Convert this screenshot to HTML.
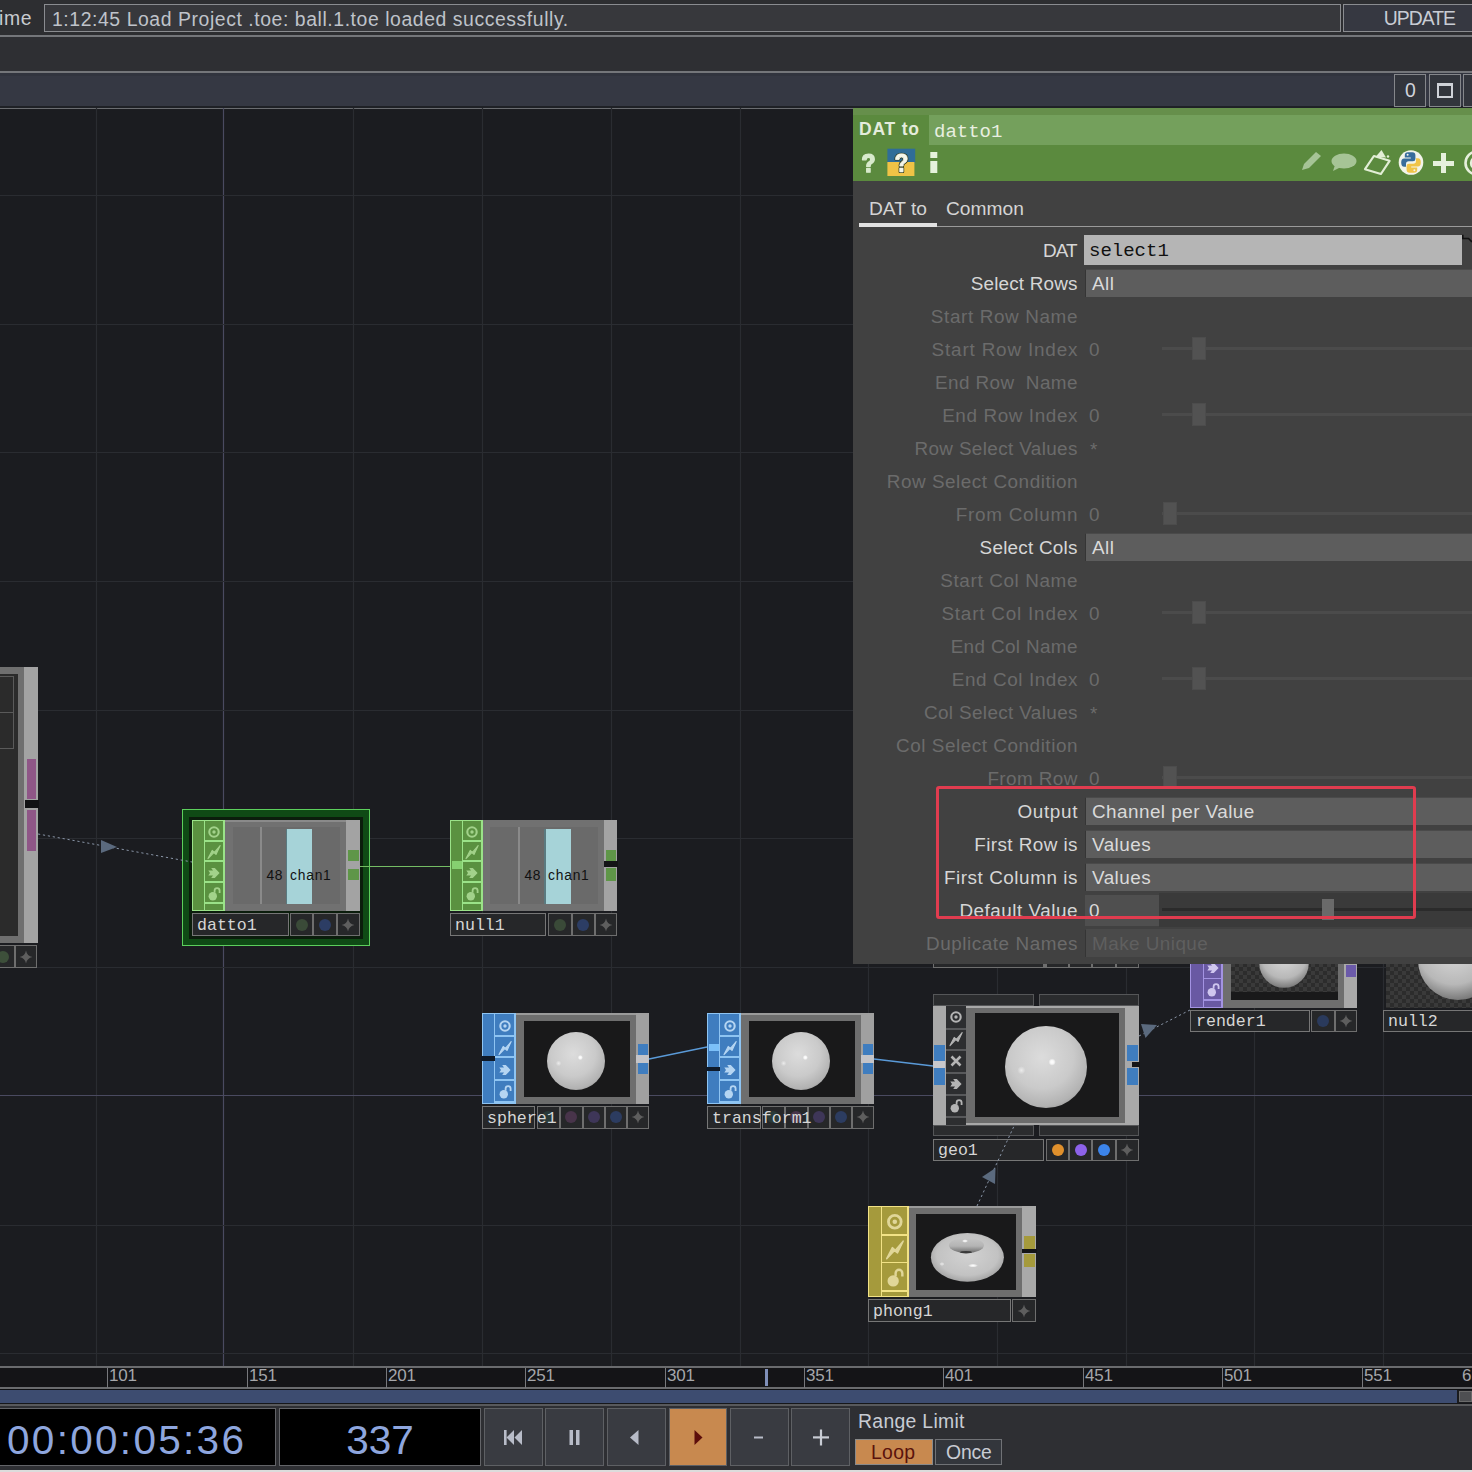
<!DOCTYPE html>
<html><head><meta charset="utf-8"><style>
html,body{margin:0;padding:0;width:1472px;height:1472px;overflow:hidden;background:#1b1c20}
body>div{position:absolute}
.t{position:absolute;white-space:pre;line-height:1}
</style></head><body>
<div style="left:0px;top:0px;width:1472px;height:35px;background:#2d2e31"></div>
<div style="left:0px;top:35px;width:1472px;height:1.5px;background:#74767a"></div>
<div style="left:0px;top:36.5px;width:1472px;height:34.5px;background:#2e2f33"></div>
<div style="left:0px;top:71px;width:1472px;height:1.5px;background:#74767a"></div>
<div style="left:0px;top:72.5px;width:1472px;height:33.5px;background:#353843"></div>
<div style="left:0px;top:72.5px;width:1472px;height:3.5px;background:#31343e"></div>
<div style="left:0px;top:106px;width:1472px;height:2px;background:#1f2126"></div>
<div style="left:0px;top:108px;width:853px;height:1.2000000000000028px;background:#6a6c70"></div>
<div class="t" style="left:-1px;top:8.5px;font-family:'Liberation Sans',sans-serif;font-size:19.4px;font-weight:normal;color:#c8cbd0;letter-spacing:0.6px;">ime</div>
<div style="left:44px;top:4px;width:1297px;height:28px;background:#37383c;border:1.2px solid #8a8c90;box-sizing:border-box"></div>
<div class="t" style="left:52px;top:9.5px;font-family:'Liberation Sans',sans-serif;font-size:19.4px;font-weight:normal;color:#bfc3ca;letter-spacing:0.57px;">1:12:45 Load Project .toe: ball.1.toe loaded successfully.</div>
<div style="left:1343px;top:4px;width:137px;height:28px;background:#363841;border:1.2px solid #8a8c90;box-sizing:border-box"></div>
<div class="t" style="right:17px;top:8.5px;font-family:'Liberation Sans',sans-serif;font-size:19.4px;font-weight:normal;color:#c8ccd4;letter-spacing:-1px;">UPDATE</div>
<div style="left:1394px;top:74px;width:32px;height:33px;background:#32353c;border:1px solid #85878b;box-sizing:border-box"></div>
<div class="t" style="left:1410.5px;transform:translateX(-50%);top:80.5px;font-family:'Liberation Sans',sans-serif;font-size:19.4px;font-weight:normal;color:#d0d3da;letter-spacing:0px;">0</div>
<div style="left:1429px;top:74px;width:32px;height:33px;background:#32353c;border:1px solid #85878b;box-sizing:border-box"></div>
<div style="left:1437px;top:83px;width:16px;height:15px;border:2px solid #cfd2d8;border-top-width:3px;box-sizing:border-box"></div>
<div style="left:1463px;top:74px;width:17px;height:33px;background:#32353c;border:1px solid #85878b;box-sizing:border-box"></div>
<div style="left:0px;top:109.2px;width:1472px;height:1256.8px;background:#1b1c20"></div>
<svg style="position:absolute;left:0;top:108px" width="1472" height="1258"><line x1="96.5" y1="0" x2="96.5" y2="1258" stroke="#2a2c31" stroke-width="1.2"/><line x1="223.5" y1="0" x2="223.5" y2="1258" stroke="#4a4a60" stroke-width="1.2"/><line x1="353.5" y1="0" x2="353.5" y2="1258" stroke="#2a2c31" stroke-width="1.2"/><line x1="482.5" y1="0" x2="482.5" y2="1258" stroke="#2a2c31" stroke-width="1.2"/><line x1="611.5" y1="0" x2="611.5" y2="1258" stroke="#2a2c31" stroke-width="1.2"/><line x1="740.5" y1="0" x2="740.5" y2="1258" stroke="#2a2c31" stroke-width="1.2"/><line x1="868.5" y1="0" x2="868.5" y2="1258" stroke="#2a2c31" stroke-width="1.2"/><line x1="997.5" y1="0" x2="997.5" y2="1258" stroke="#2a2c31" stroke-width="1.2"/><line x1="1126.5" y1="0" x2="1126.5" y2="1258" stroke="#2a2c31" stroke-width="1.2"/><line x1="1254.5" y1="0" x2="1254.5" y2="1258" stroke="#2a2c31" stroke-width="1.2"/><line x1="1383.5" y1="0" x2="1383.5" y2="1258" stroke="#2a2c31" stroke-width="1.2"/><line x1="0" y1="87.5" x2="1472" y2="87.5" stroke="#2a2c31" stroke-width="1.2"/><line x1="0" y1="216.5" x2="1472" y2="216.5" stroke="#2a2c31" stroke-width="1.2"/><line x1="0" y1="344.5" x2="1472" y2="344.5" stroke="#2a2c31" stroke-width="1.2"/><line x1="0" y1="473.5" x2="1472" y2="473.5" stroke="#2a2c31" stroke-width="1.2"/><line x1="0" y1="602.5" x2="1472" y2="602.5" stroke="#2a2c31" stroke-width="1.2"/><line x1="0" y1="730.5" x2="1472" y2="730.5" stroke="#2a2c31" stroke-width="1.2"/><line x1="0" y1="859.5" x2="1472" y2="859.5" stroke="#2a2c31" stroke-width="1.2"/><line x1="0" y1="987.5" x2="1472" y2="987.5" stroke="#4a4a60" stroke-width="1.2"/><line x1="0" y1="1117.5" x2="1472" y2="1117.5" stroke="#2a2c31" stroke-width="1.2"/><line x1="0" y1="1245.5" x2="1472" y2="1245.5" stroke="#2a2c31" stroke-width="1.2"/></svg>
<div style="left:0px;top:667px;width:38px;height:276px;background:#6f6f6f"></div>
<div style="left:0px;top:674px;width:18px;height:262px;background:#2b2b2b"></div>
<div style="left:0px;top:676px;width:14px;height:73px;border:1px solid #5a5a5a;border-left:none;box-sizing:border-box"></div>
<div style="left:0px;top:712px;width:14px;height:1px;background:#5a5a5a"></div>
<div style="left:24px;top:667px;width:14px;height:276px;background:#a3a3a3"></div>
<div style="left:26.5px;top:759px;width:9.5px;height:40px;background:#8f5687"></div>
<div style="left:26.5px;top:810px;width:9.5px;height:41px;background:#8f5687"></div>
<div style="left:25px;top:800px;width:14px;height:8px;background:#111214"></div>
<div style="left:-10px;top:945px;width:25px;height:23px;background:#262729;border:1.6px solid #6e6e6e;box-sizing:border-box"></div>
<div style="left:-3.5px;top:950.5px;width:12px;height:12px;border-radius:50%;background:#3d4f3a"></div>
<div style="left:15px;top:945px;width:22px;height:23px;background:#262729;border:1.6px solid #6e6e6e;box-sizing:border-box"></div>
<svg style="position:absolute;left:18.0px;top:948.5px" width="16.0" height="16.0" viewBox="0 0 16 16"><path d="M8 1.5 Q9 7 14.5 8 Q9 9 8 14.5 Q7 9 1.5 8 Q7 7 8 1.5 Z" fill="#5e5e5e"/></svg>
<div style="left:182px;top:809px;width:188px;height:137px;background:#0f4a15;border:1.6px solid #5ccf5c;box-sizing:border-box"></div>
<div style="left:189px;top:817px;width:174px;height:122px;background:#0b1d0c"></div>
<div style="left:192px;top:820px;width:168px;height:91px;background:#717171"></div>
<div style="left:225px;top:820px;width:121px;height:2px;background:#8a8a8a"></div>
<div style="left:233px;top:827px;width:107px;height:77px;background:#6a6a6a"></div>
<div style="left:260px;top:827px;width:1.5px;height:77px;background:#8a8a8a"></div>
<div style="left:285.5px;top:829px;width:26.5px;height:75px;background:#a6d3d8"></div>
<div style="left:285.5px;top:829px;width:1.5px;height:75px;background:#5a7a80"></div>
<div style="left:192px;top:820px;width:33px;height:91px;background:#5a9140"></div>
<div style="left:192px;top:820px;width:1.3000000000000114px;height:91px;background:#9ae288"></div>
<div style="left:192px;top:820px;width:33px;height:1.2999999999999545px;background:#9ae288"></div>
<div style="left:192px;top:909.7px;width:33px;height:1.2999999999999545px;background:#9ae288"></div>
<div style="left:203.7px;top:820px;width:1.3000000000000114px;height:91px;background:#9ae288"></div>
<div style="left:223px;top:820px;width:2px;height:91px;background:#9ae288"></div>
<div style="left:204px;top:840.3px;width:21px;height:1.400000000000091px;background:#9ae288"></div>
<div style="left:204px;top:860.3px;width:21px;height:1.400000000000091px;background:#9ae288"></div>
<div style="left:204px;top:881.3px;width:21px;height:1.400000000000091px;background:#9ae288"></div>
<div style="left:204px;top:902.3px;width:21px;height:1.400000000000091px;background:#9ae288"></div>
<svg style="position:absolute;left:206.2px;top:823.5px" width="16.0" height="16.0" viewBox="0 0 16 16"><circle cx="8" cy="8" r="4.7" fill="none" stroke="#a2d28a" stroke-width="2.1"/><circle cx="8" cy="8" r="1.7" fill="#a2d28a"/></svg>
<svg style="position:absolute;left:206.2px;top:844.0px" width="16.0" height="16.0" viewBox="0 0 16 16"><path d="M2 14.6 L6.2 6.4 L8.4 8.4 L14.2 1.6 L10 10.4 L7.8 8.6 Z" fill="#a2d28a" stroke="#a2d28a" stroke-width="1.1" stroke-linejoin="round"/></svg>
<svg style="position:absolute;left:206.2px;top:864.5px" width="16.0" height="16.0" viewBox="0 0 16 16"><path d="M2.3 5.6 H7 L5.2 3 H8.8 L13.6 8 L8.8 13 H5.2 L7 10.4 H2.3 L4 8 Z" fill="#a2d28a"/></svg>
<svg style="position:absolute;left:206.2px;top:885.5px" width="16.0" height="16.0" viewBox="0 0 16 16"><circle cx="6.8" cy="10.3" r="4.2" fill="#a2d28a"/><path d="M8.6 6.8 V4.6 A2.5 2.5 0 0 1 13.6 4.6 V7" fill="none" stroke="#a2d28a" stroke-width="1.8"/></svg>
<div style="left:346px;top:820px;width:14px;height:91px;background:#a3a3a3"></div>
<div style="left:347.5px;top:850px;width:11.0px;height:11px;background:#5f9648"></div>
<div style="left:347.5px;top:869px;width:11.0px;height:11px;background:#5f9648"></div>
<div class="t" style="left:266.5px;top:869.3px;font-family:'Liberation Sans',sans-serif;font-size:13.8px;font-weight:normal;color:#111111;letter-spacing:0.6px;">48</div>
<div class="t" style="left:290px;top:869.3px;font-family:'Liberation Sans',sans-serif;font-size:13.8px;font-weight:normal;color:#111111;letter-spacing:0.8px;">chan1</div>
<div style="left:192px;top:913px;width:97px;height:23px;background:#262729;border:1.6px solid #767676;box-sizing:border-box"></div>
<div class="t" style="left:197px;top:918.4px;font-family:'Liberation Mono',monospace;font-size:16.6px;font-weight:normal;color:#d6d6d6;letter-spacing:0px;">datto1</div>
<div style="left:290px;top:913px;width:23px;height:23px;background:#262729;border:1.6px solid #6e6e6e;box-sizing:border-box"></div>
<div style="left:295.5px;top:918.5px;width:12px;height:12px;border-radius:50%;background:#3a4a38"></div>
<div style="left:313px;top:913px;width:23.5px;height:23px;background:#262729;border:1.6px solid #6e6e6e;box-sizing:border-box"></div>
<div style="left:318.75px;top:918.5px;width:12px;height:12px;border-radius:50%;background:#2c3d64"></div>
<div style="left:336.5px;top:913px;width:23.5px;height:23px;background:#262729;border:1.6px solid #6e6e6e;box-sizing:border-box"></div>
<svg style="position:absolute;left:340.25px;top:916.5px" width="16.0" height="16.0" viewBox="0 0 16 16"><path d="M8 1.5 Q9 7 14.5 8 Q9 9 8 14.5 Q7 9 1.5 8 Q7 7 8 1.5 Z" fill="#5e5e5e"/></svg>
<div style="left:360px;top:866px;width:90px;height:1.2000000000000455px;background:#74bc64"></div>
<div style="left:450px;top:820px;width:167px;height:91px;background:#717171"></div>
<div style="left:490px;top:827px;width:108px;height:77px;background:#6a6a6a"></div>
<div style="left:518px;top:827px;width:1.5px;height:77px;background:#8a8a8a"></div>
<div style="left:544px;top:829px;width:26.5px;height:75px;background:#a6d3d8"></div>
<div style="left:544px;top:829px;width:1.5px;height:75px;background:#5a7a80"></div>
<div style="left:450px;top:820px;width:32.5px;height:91px;background:#5a9140"></div>
<div style="left:450px;top:820px;width:1.3000000000000114px;height:91px;background:#9ae288"></div>
<div style="left:450px;top:820px;width:32.5px;height:1.2999999999999545px;background:#9ae288"></div>
<div style="left:450px;top:909.7px;width:32.5px;height:1.2999999999999545px;background:#9ae288"></div>
<div style="left:462.2px;top:820px;width:1.3000000000000114px;height:91px;background:#9ae288"></div>
<div style="left:480.5px;top:820px;width:2.0px;height:91px;background:#9ae288"></div>
<div style="left:462.5px;top:840.3px;width:20.0px;height:1.400000000000091px;background:#9ae288"></div>
<div style="left:462.5px;top:860.3px;width:20.0px;height:1.400000000000091px;background:#9ae288"></div>
<div style="left:462.5px;top:881.3px;width:20.0px;height:1.400000000000091px;background:#9ae288"></div>
<div style="left:462.5px;top:902.3px;width:20.0px;height:1.400000000000091px;background:#9ae288"></div>
<svg style="position:absolute;left:464.2px;top:823.5px" width="16.0" height="16.0" viewBox="0 0 16 16"><circle cx="8" cy="8" r="4.7" fill="none" stroke="#a2d28a" stroke-width="2.1"/><circle cx="8" cy="8" r="1.7" fill="#a2d28a"/></svg>
<svg style="position:absolute;left:464.2px;top:844.0px" width="16.0" height="16.0" viewBox="0 0 16 16"><path d="M2 14.6 L6.2 6.4 L8.4 8.4 L14.2 1.6 L10 10.4 L7.8 8.6 Z" fill="#a2d28a" stroke="#a2d28a" stroke-width="1.1" stroke-linejoin="round"/></svg>
<svg style="position:absolute;left:464.2px;top:864.5px" width="16.0" height="16.0" viewBox="0 0 16 16"><path d="M2.3 5.6 H7 L5.2 3 H8.8 L13.6 8 L8.8 13 H5.2 L7 10.4 H2.3 L4 8 Z" fill="#a2d28a"/></svg>
<svg style="position:absolute;left:464.2px;top:885.5px" width="16.0" height="16.0" viewBox="0 0 16 16"><circle cx="6.8" cy="10.3" r="4.2" fill="#a2d28a"/><path d="M8.6 6.8 V4.6 A2.5 2.5 0 0 1 13.6 4.6 V7" fill="none" stroke="#a2d28a" stroke-width="1.8"/></svg>
<div style="left:451.5px;top:861px;width:10.5px;height:7.5px;background:#86d070"></div>
<div style="left:604px;top:820px;width:13px;height:91px;background:#a3a3a3"></div>
<div style="left:605.5px;top:850px;width:10.0px;height:11px;background:#5f9648"></div>
<div style="left:605.5px;top:868px;width:10.0px;height:12.5px;background:#5f9648"></div>
<div style="left:604px;top:861px;width:14px;height:6px;background:#141416"></div>
<div class="t" style="left:524.5px;top:869.3px;font-family:'Liberation Sans',sans-serif;font-size:13.8px;font-weight:normal;color:#111111;letter-spacing:0.6px;">48</div>
<div class="t" style="left:548px;top:869.3px;font-family:'Liberation Sans',sans-serif;font-size:13.8px;font-weight:normal;color:#111111;letter-spacing:0.8px;">chan1</div>
<div style="left:450px;top:913px;width:96px;height:23px;background:#262729;border:1.6px solid #767676;box-sizing:border-box"></div>
<div class="t" style="left:455px;top:918.4px;font-family:'Liberation Mono',monospace;font-size:16.6px;font-weight:normal;color:#d6d6d6;letter-spacing:0px;">null1</div>
<div style="left:548px;top:913px;width:23.5px;height:23px;background:#262729;border:1.6px solid #6e6e6e;box-sizing:border-box"></div>
<div style="left:553.75px;top:918.5px;width:12px;height:12px;border-radius:50%;background:#3a4a38"></div>
<div style="left:571.5px;top:913px;width:23.0px;height:23px;background:#262729;border:1.6px solid #6e6e6e;box-sizing:border-box"></div>
<div style="left:577.0px;top:918.5px;width:12px;height:12px;border-radius:50%;background:#2c3d64"></div>
<div style="left:594.5px;top:913px;width:22.5px;height:23px;background:#262729;border:1.6px solid #6e6e6e;box-sizing:border-box"></div>
<svg style="position:absolute;left:597.75px;top:916.5px" width="16.0" height="16.0" viewBox="0 0 16 16"><path d="M8 1.5 Q9 7 14.5 8 Q9 9 8 14.5 Q7 9 1.5 8 Q7 7 8 1.5 Z" fill="#5e5e5e"/></svg>
<div style="left:482px;top:1013px;width:167px;height:91px;background:#6e6e6e"></div>
<div style="left:516px;top:1013px;width:120px;height:2px;background:#9a9a9a"></div>
<div style="left:524px;top:1021px;width:106px;height:76px;background:#19191a"></div>
<div style="left:482px;top:1013px;width:34px;height:91px;background:#3f7dbf"></div>
<div style="left:482px;top:1013px;width:1.3000000000000114px;height:91px;background:#8ec4f2"></div>
<div style="left:482px;top:1013px;width:34px;height:1.2999999999999545px;background:#8ec4f2"></div>
<div style="left:482px;top:1102.7px;width:34px;height:1.2999999999999545px;background:#8ec4f2"></div>
<div style="left:494.2px;top:1013px;width:1.3000000000000114px;height:91px;background:#8ec4f2"></div>
<div style="left:514px;top:1013px;width:2px;height:91px;background:#8ec4f2"></div>
<div style="left:494.5px;top:1035.3px;width:21.5px;height:1.400000000000091px;background:#8ec4f2"></div>
<div style="left:494.5px;top:1056.3px;width:21.5px;height:1.400000000000091px;background:#8ec4f2"></div>
<div style="left:494.5px;top:1079.3px;width:21.5px;height:1.400000000000091px;background:#8ec4f2"></div>
<div style="left:494.5px;top:1101.3px;width:21.5px;height:1.400000000000091px;background:#8ec4f2"></div>
<svg style="position:absolute;left:496.95px;top:1017.5px" width="16.0" height="16.0" viewBox="0 0 16 16"><circle cx="8" cy="8" r="4.7" fill="none" stroke="#b5d5f2" stroke-width="2.1"/><circle cx="8" cy="8" r="1.7" fill="#b5d5f2"/></svg>
<svg style="position:absolute;left:496.95px;top:1039.5px" width="16.0" height="16.0" viewBox="0 0 16 16"><path d="M2 14.6 L6.2 6.4 L8.4 8.4 L14.2 1.6 L10 10.4 L7.8 8.6 Z" fill="#b5d5f2" stroke="#b5d5f2" stroke-width="1.1" stroke-linejoin="round"/></svg>
<svg style="position:absolute;left:496.95px;top:1061.5px" width="16.0" height="16.0" viewBox="0 0 16 16"><path d="M2.3 5.6 H7 L5.2 3 H8.8 L13.6 8 L8.8 13 H5.2 L7 10.4 H2.3 L4 8 Z" fill="#b5d5f2"/></svg>
<svg style="position:absolute;left:496.95px;top:1084.0px" width="16.0" height="16.0" viewBox="0 0 16 16"><circle cx="6.8" cy="10.3" r="4.2" fill="#b5d5f2"/><path d="M8.6 6.8 V4.6 A2.5 2.5 0 0 1 13.6 4.6 V7" fill="none" stroke="#b5d5f2" stroke-width="1.8"/></svg>
<div style="left:481px;top:1056px;width:13.5px;height:5px;background:#0f1a28"></div>
<div style="left:636px;top:1013px;width:13px;height:91px;background:#a0a0a0"></div>
<div style="left:636px;top:1055px;width:13px;height:7.5px;background:#c4c4c8"></div>
<div style="left:637.5px;top:1044px;width:10.0px;height:11px;background:#3f7dbf"></div>
<div style="left:637.5px;top:1062.5px;width:10.0px;height:11.0px;background:#3f7dbf"></div>
<svg style="position:absolute;left:545px;top:1029.6px" width="62" height="62"><defs><radialGradient id="sp1" cx="0.45" cy="0.38" r="0.7"><stop offset="0" stop-color="#dcdcdc"/><stop offset="0.55" stop-color="#cacaca"/><stop offset="0.85" stop-color="#b2b2b2"/><stop offset="1" stop-color="#909090"/></radialGradient><radialGradient id="sp1h"><stop offset="0" stop-color="#fff"/><stop offset="0.5" stop-color="#fff" stop-opacity="0.8"/><stop offset="1" stop-color="#fff" stop-opacity="0"/></radialGradient><radialGradient id="sp1h2"><stop offset="0" stop-color="#fff" stop-opacity="0.6"/><stop offset="1" stop-color="#fff" stop-opacity="0"/></radialGradient></defs><circle cx="31" cy="31" r="29" fill="url(#sp1)"/><circle cx="35.35" cy="27.52" r="2.61" fill="url(#sp1h)"/><circle cx="13.600000000000001" cy="33.32" r="2.9000000000000004" fill="url(#sp1h2)"/></svg>
<div style="left:482px;top:1106px;width:53px;height:22.5px;background:#262729;border:1.6px solid #767676;box-sizing:border-box"></div>
<div style="left:537px;top:1106px;width:22.5px;height:22.5px;background:#262729;border:1.6px solid #6e6e6e;box-sizing:border-box"></div>
<div style="left:542.25px;top:1111.25px;width:12px;height:12px;border-radius:50%;background:#2a3a38"></div>
<div style="left:559.5px;top:1106px;width:23.0px;height:22.5px;background:#262729;border:1.6px solid #6e6e6e;box-sizing:border-box"></div>
<div style="left:565.0px;top:1111.25px;width:12px;height:12px;border-radius:50%;background:#48344a"></div>
<div style="left:582.5px;top:1106px;width:22.0px;height:22.5px;background:#262729;border:1.6px solid #6e6e6e;box-sizing:border-box"></div>
<div style="left:587.5px;top:1111.25px;width:12px;height:12px;border-radius:50%;background:#3e3658"></div>
<div style="left:604.5px;top:1106px;width:22.5px;height:22.5px;background:#262729;border:1.6px solid #6e6e6e;box-sizing:border-box"></div>
<div style="left:609.75px;top:1111.25px;width:12px;height:12px;border-radius:50%;background:#2c3c60"></div>
<div style="left:627px;top:1106px;width:22px;height:22.5px;background:#262729;border:1.6px solid #6e6e6e;box-sizing:border-box"></div>
<svg style="position:absolute;left:630.0px;top:1109.25px" width="16.0" height="16.0" viewBox="0 0 16 16"><path d="M8 1.5 Q9 7 14.5 8 Q9 9 8 14.5 Q7 9 1.5 8 Q7 7 8 1.5 Z" fill="#5e5e5e"/></svg>
<div class="t" style="left:487px;top:1111.4px;font-family:'Liberation Mono',monospace;font-size:16.6px;font-weight:normal;color:#d6d6d6;letter-spacing:0px;">sphere1</div>
<div style="left:707px;top:1013px;width:167px;height:91px;background:#6e6e6e"></div>
<div style="left:741px;top:1013px;width:120px;height:2px;background:#9a9a9a"></div>
<div style="left:749px;top:1021px;width:106px;height:76px;background:#19191a"></div>
<div style="left:707px;top:1013px;width:34px;height:91px;background:#3f7dbf"></div>
<div style="left:707px;top:1013px;width:1.2999999999999545px;height:91px;background:#8ec4f2"></div>
<div style="left:707px;top:1013px;width:34px;height:1.2999999999999545px;background:#8ec4f2"></div>
<div style="left:707px;top:1102.7px;width:34px;height:1.2999999999999545px;background:#8ec4f2"></div>
<div style="left:719.2px;top:1013px;width:1.2999999999999545px;height:91px;background:#8ec4f2"></div>
<div style="left:739px;top:1013px;width:2px;height:91px;background:#8ec4f2"></div>
<div style="left:719.5px;top:1035.3px;width:21.5px;height:1.400000000000091px;background:#8ec4f2"></div>
<div style="left:719.5px;top:1056.3px;width:21.5px;height:1.400000000000091px;background:#8ec4f2"></div>
<div style="left:719.5px;top:1079.3px;width:21.5px;height:1.400000000000091px;background:#8ec4f2"></div>
<div style="left:719.5px;top:1101.3px;width:21.5px;height:1.400000000000091px;background:#8ec4f2"></div>
<svg style="position:absolute;left:721.95px;top:1017.5px" width="16.0" height="16.0" viewBox="0 0 16 16"><circle cx="8" cy="8" r="4.7" fill="none" stroke="#b5d5f2" stroke-width="2.1"/><circle cx="8" cy="8" r="1.7" fill="#b5d5f2"/></svg>
<svg style="position:absolute;left:721.95px;top:1039.5px" width="16.0" height="16.0" viewBox="0 0 16 16"><path d="M2 14.6 L6.2 6.4 L8.4 8.4 L14.2 1.6 L10 10.4 L7.8 8.6 Z" fill="#b5d5f2" stroke="#b5d5f2" stroke-width="1.1" stroke-linejoin="round"/></svg>
<svg style="position:absolute;left:721.95px;top:1061.5px" width="16.0" height="16.0" viewBox="0 0 16 16"><path d="M2.3 5.6 H7 L5.2 3 H8.8 L13.6 8 L8.8 13 H5.2 L7 10.4 H2.3 L4 8 Z" fill="#b5d5f2"/></svg>
<svg style="position:absolute;left:721.95px;top:1084.0px" width="16.0" height="16.0" viewBox="0 0 16 16"><circle cx="6.8" cy="10.3" r="4.2" fill="#b5d5f2"/><path d="M8.6 6.8 V4.6 A2.5 2.5 0 0 1 13.6 4.6 V7" fill="none" stroke="#b5d5f2" stroke-width="1.8"/></svg>
<div style="left:706px;top:1067px;width:13.5px;height:4px;background:#0f1a28"></div>
<div style="left:708.5px;top:1043.5px;width:10.5px;height:7.0px;background:#7cc0f8"></div>
<div style="left:861px;top:1013px;width:13px;height:91px;background:#a0a0a0"></div>
<div style="left:861px;top:1055px;width:13px;height:7.5px;background:#c4c4c8"></div>
<div style="left:862.5px;top:1044px;width:10.0px;height:11px;background:#3f7dbf"></div>
<div style="left:862.5px;top:1062.5px;width:10.0px;height:11.0px;background:#3f7dbf"></div>
<svg style="position:absolute;left:770px;top:1029.6px" width="62" height="62"><defs><radialGradient id="sp2" cx="0.45" cy="0.38" r="0.7"><stop offset="0" stop-color="#dcdcdc"/><stop offset="0.55" stop-color="#cacaca"/><stop offset="0.85" stop-color="#b2b2b2"/><stop offset="1" stop-color="#909090"/></radialGradient><radialGradient id="sp2h"><stop offset="0" stop-color="#fff"/><stop offset="0.5" stop-color="#fff" stop-opacity="0.8"/><stop offset="1" stop-color="#fff" stop-opacity="0"/></radialGradient><radialGradient id="sp2h2"><stop offset="0" stop-color="#fff" stop-opacity="0.6"/><stop offset="1" stop-color="#fff" stop-opacity="0"/></radialGradient></defs><circle cx="31" cy="31" r="29" fill="url(#sp2)"/><circle cx="35.35" cy="27.52" r="2.61" fill="url(#sp2h)"/><circle cx="13.600000000000001" cy="33.32" r="2.9000000000000004" fill="url(#sp2h2)"/></svg>
<div style="left:707px;top:1106px;width:53.5px;height:22.5px;background:#262729;border:1.6px solid #767676;box-sizing:border-box"></div>
<div style="left:762px;top:1106px;width:22.5px;height:22.5px;background:#262729;border:1.6px solid #6e6e6e;box-sizing:border-box"></div>
<div style="left:767.25px;top:1111.25px;width:12px;height:12px;border-radius:50%;background:#2a3a38"></div>
<div style="left:784.5px;top:1106px;width:23.0px;height:22.5px;background:#262729;border:1.6px solid #6e6e6e;box-sizing:border-box"></div>
<div style="left:790.0px;top:1111.25px;width:12px;height:12px;border-radius:50%;background:#48344a"></div>
<div style="left:807.5px;top:1106px;width:22.0px;height:22.5px;background:#262729;border:1.6px solid #6e6e6e;box-sizing:border-box"></div>
<div style="left:812.5px;top:1111.25px;width:12px;height:12px;border-radius:50%;background:#3e3658"></div>
<div style="left:829.5px;top:1106px;width:22.5px;height:22.5px;background:#262729;border:1.6px solid #6e6e6e;box-sizing:border-box"></div>
<div style="left:834.75px;top:1111.25px;width:12px;height:12px;border-radius:50%;background:#2c3c60"></div>
<div style="left:852px;top:1106px;width:22px;height:22.5px;background:#262729;border:1.6px solid #6e6e6e;box-sizing:border-box"></div>
<svg style="position:absolute;left:855.0px;top:1109.25px" width="16.0" height="16.0" viewBox="0 0 16 16"><path d="M8 1.5 Q9 7 14.5 8 Q9 9 8 14.5 Q7 9 1.5 8 Q7 7 8 1.5 Z" fill="#5e5e5e"/></svg>
<div class="t" style="left:712px;top:1111.4px;font-family:'Liberation Mono',monospace;font-size:16.6px;font-weight:normal;color:#d6d6d6;letter-spacing:0px;">transform1</div>
<div style="left:933px;top:945px;width:110.5px;height:22.5px;background:#262729;border:1.6px solid #6e6e6e;box-sizing:border-box"></div>
<div style="left:1043.5px;top:945px;width:2.5px;height:22.5px;background:#262729;border:1.6px solid #6e6e6e;box-sizing:border-box"></div>
<div style="left:1046px;top:945px;width:23px;height:22.5px;background:#262729;border:1.6px solid #6e6e6e;box-sizing:border-box"></div>
<div style="left:1069px;top:945px;width:23px;height:22.5px;background:#262729;border:1.6px solid #6e6e6e;box-sizing:border-box"></div>
<div style="left:1092px;top:945px;width:23.5px;height:22.5px;background:#262729;border:1.6px solid #6e6e6e;box-sizing:border-box"></div>
<div style="left:1115.5px;top:945px;width:23.0px;height:22.5px;background:#262729;border:1.6px solid #6e6e6e;box-sizing:border-box"></div>
<div style="left:933px;top:994px;width:101px;height:12px;background:#2b2c2e;border:1.5px solid #555658;box-sizing:border-box"></div>
<div style="left:1039px;top:994px;width:100px;height:12px;background:#2b2c2e;border:1.5px solid #555658;box-sizing:border-box"></div>
<div style="left:933px;top:1125px;width:101px;height:11px;background:#2b2c2e;border:1.5px solid #555658;box-sizing:border-box"></div>
<div style="left:1039px;top:1125px;width:100px;height:11px;background:#2b2c2e;border:1.5px solid #555658;box-sizing:border-box"></div>
<div style="left:933px;top:1006px;width:206px;height:119px;background:#6c6c6c"></div>
<div style="left:966px;top:1006px;width:159px;height:2px;background:#a8a8a8"></div>
<div style="left:966px;top:1123px;width:159px;height:2px;background:#a8a8a8"></div>
<div style="left:975px;top:1013px;width:144px;height:104px;background:#19191a"></div>
<div style="left:933px;top:1006px;width:12.5px;height:119px;background:#a9a9a9"></div>
<div style="left:945.5px;top:1006px;width:20.5px;height:119px;background:#2d2e30"></div>
<div style="left:945.5px;top:1027.5px;width:20.5px;height:2.0px;background:#58595b"></div>
<div style="left:945.5px;top:1049px;width:20.5px;height:2px;background:#58595b"></div>
<div style="left:945.5px;top:1071.5px;width:20.5px;height:2.0px;background:#58595b"></div>
<div style="left:945.5px;top:1094px;width:20.5px;height:2px;background:#58595b"></div>
<div style="left:945.5px;top:1116px;width:20.5px;height:2px;background:#58595b"></div>
<svg style="position:absolute;left:947.8px;top:1009.25px" width="16.0" height="16.0" viewBox="0 0 16 16"><circle cx="8" cy="8" r="4.7" fill="none" stroke="#b4b4b4" stroke-width="2.1"/><circle cx="8" cy="8" r="1.7" fill="#b4b4b4"/></svg>
<svg style="position:absolute;left:947.8px;top:1031.25px" width="16.0" height="16.0" viewBox="0 0 16 16"><path d="M2 14.6 L6.2 6.4 L8.4 8.4 L14.2 1.6 L10 10.4 L7.8 8.6 Z" fill="#b4b4b4" stroke="#b4b4b4" stroke-width="1.1" stroke-linejoin="round"/></svg>
<svg style="position:absolute;left:947.8px;top:1053.25px" width="16.0" height="16.0" viewBox="0 0 16 16"><path d="M3.5 3.5 L12.5 12.5 M12.5 3.5 L3.5 12.5" stroke="#b4b4b4" stroke-width="2.6"/></svg>
<svg style="position:absolute;left:947.8px;top:1075.75px" width="16.0" height="16.0" viewBox="0 0 16 16"><path d="M2.3 5.6 H7 L5.2 3 H8.8 L13.6 8 L8.8 13 H5.2 L7 10.4 H2.3 L4 8 Z" fill="#b4b4b4"/></svg>
<svg style="position:absolute;left:947.8px;top:1098.0px" width="16.0" height="16.0" viewBox="0 0 16 16"><circle cx="6.8" cy="10.3" r="4.2" fill="#b4b4b4"/><path d="M8.6 6.8 V4.6 A2.5 2.5 0 0 1 13.6 4.6 V7" fill="none" stroke="#b4b4b4" stroke-width="1.8"/></svg>
<div style="left:934px;top:1045px;width:11px;height:15.5px;background:#3f7dbf"></div>
<div style="left:934px;top:1068px;width:11px;height:16.5px;background:#3f7dbf"></div>
<div style="left:933px;top:1060.5px;width:12px;height:7.5px;background:#c8c8cc"></div>
<div style="left:1125px;top:1006px;width:14px;height:119px;background:#a9a9a9"></div>
<div style="left:1126.5px;top:1045px;width:11.0px;height:15.5px;background:#3f7dbf"></div>
<div style="left:1126.5px;top:1068px;width:11.0px;height:16.5px;background:#3f7dbf"></div>
<div style="left:1132px;top:1062px;width:8px;height:4.5px;background:#141416"></div>
<svg style="position:absolute;left:1003px;top:1024px" width="86" height="86"><defs><radialGradient id="sp3" cx="0.45" cy="0.38" r="0.7"><stop offset="0" stop-color="#dcdcdc"/><stop offset="0.55" stop-color="#cacaca"/><stop offset="0.85" stop-color="#b2b2b2"/><stop offset="1" stop-color="#909090"/></radialGradient><radialGradient id="sp3h"><stop offset="0" stop-color="#fff"/><stop offset="0.5" stop-color="#fff" stop-opacity="0.8"/><stop offset="1" stop-color="#fff" stop-opacity="0"/></radialGradient><radialGradient id="sp3h2"><stop offset="0" stop-color="#fff" stop-opacity="0.6"/><stop offset="1" stop-color="#fff" stop-opacity="0"/></radialGradient></defs><circle cx="43" cy="43" r="41" fill="url(#sp3)"/><circle cx="49.15" cy="38.08" r="3.69" fill="url(#sp3h)"/><circle cx="18.400000000000002" cy="46.28" r="4.1000000000000005" fill="url(#sp3h2)"/></svg>
<div style="left:933px;top:1138.5px;width:111px;height:22.0px;background:#262729;border:1.6px solid #767676;box-sizing:border-box"></div>
<div class="t" style="left:938px;top:1142.9px;font-family:'Liberation Mono',monospace;font-size:16.6px;font-weight:normal;color:#d6d6d6;letter-spacing:0px;">geo1</div>
<div style="left:1046px;top:1138.5px;width:23.200000000000045px;height:22.0px;background:#262729;border:1.6px solid #6e6e6e;box-sizing:border-box"></div>
<div style="left:1051.6px;top:1143.5px;width:12px;height:12px;border-radius:50%;background:#e0902c"></div>
<div style="left:1069.2px;top:1138.5px;width:23.200000000000045px;height:22.0px;background:#262729;border:1.6px solid #6e6e6e;box-sizing:border-box"></div>
<div style="left:1074.8000000000002px;top:1143.5px;width:12px;height:12px;border-radius:50%;background:#8d62ea"></div>
<div style="left:1092.4px;top:1138.5px;width:23.199999999999818px;height:22.0px;background:#262729;border:1.6px solid #6e6e6e;box-sizing:border-box"></div>
<div style="left:1098.0px;top:1143.5px;width:12px;height:12px;border-radius:50%;background:#3c84ea"></div>
<div style="left:1115.6px;top:1138.5px;width:23.40000000000009px;height:22.0px;background:#262729;border:1.6px solid #6e6e6e;box-sizing:border-box"></div>
<svg style="position:absolute;left:1119.3px;top:1141.5px" width="16.0" height="16.0" viewBox="0 0 16 16"><path d="M8 1.5 Q9 7 14.5 8 Q9 9 8 14.5 Q7 9 1.5 8 Q7 7 8 1.5 Z" fill="#5e5e5e"/></svg>
<div style="left:1190px;top:963px;width:167px;height:45px;background:#6e6e6e"></div>
<div style="left:1231px;top:963px;width:107px;height:29px;background-color:#3a3a3a;background-image:linear-gradient(45deg,#2c2c2c 25%,transparent 25%,transparent 75%,#2c2c2c 75%),linear-gradient(45deg,#2c2c2c 25%,transparent 25%,transparent 75%,#2c2c2c 75%);background-size:8px 8px;background-position:0 0,4px 4px"></div>
<svg style="position:absolute;left:1259px;top:938px" width="50" height="50"><defs><radialGradient id="sp4" cx="0.5" cy="0.35" r="0.65"><stop offset="0" stop-color="#dcdcdc"/><stop offset="0.7" stop-color="#b8b8b8"/><stop offset="1" stop-color="#7a7a7a"/></radialGradient></defs><circle cx="25" cy="25" r="24.8" fill="url(#sp4)"/></svg>
<div style="left:1231px;top:992px;width:107px;height:8px;background:#19191a"></div>
<div style="left:1190px;top:955px;width:33px;height:53px;background:#6959a3"></div>
<div style="left:1190px;top:955px;width:1.2999999999999545px;height:53px;background:#a393e2"></div>
<div style="left:1190px;top:955px;width:33px;height:1.2999999999999545px;background:#a393e2"></div>
<div style="left:1190px;top:1006.7px;width:33px;height:1.2999999999999545px;background:#a393e2"></div>
<div style="left:1202.7px;top:955px;width:1.2999999999999545px;height:53px;background:#a393e2"></div>
<div style="left:1221px;top:955px;width:2px;height:53px;background:#a393e2"></div>
<div style="left:1203px;top:977.8px;width:20px;height:1.400000000000091px;background:#a393e2"></div>
<div style="left:1203px;top:999.3px;width:20px;height:1.400000000000091px;background:#a393e2"></div>
<svg style="position:absolute;left:1204.7px;top:959.75px" width="16.0" height="16.0" viewBox="0 0 16 16"><path d="M2.3 5.6 H7 L5.2 3 H8.8 L13.6 8 L8.8 13 H5.2 L7 10.4 H2.3 L4 8 Z" fill="#cfc6ee"/></svg>
<svg style="position:absolute;left:1204.7px;top:982.25px" width="16.0" height="16.0" viewBox="0 0 16 16"><circle cx="6.8" cy="10.3" r="4.2" fill="#cfc6ee"/><path d="M8.6 6.8 V4.6 A2.5 2.5 0 0 1 13.6 4.6 V7" fill="none" stroke="#cfc6ee" stroke-width="1.8"/></svg>
<div style="left:1344px;top:963px;width:13px;height:45px;background:#a9a9a9"></div>
<div style="left:1345.5px;top:964.5px;width:10.0px;height:12.0px;background:#6b5aa9"></div>
<div style="left:1190px;top:1009.5px;width:120px;height:22.0px;background:#262729;border:1.6px solid #767676;box-sizing:border-box"></div>
<div class="t" style="left:1196px;top:1013.9px;font-family:'Liberation Mono',monospace;font-size:16.6px;font-weight:normal;color:#d6d6d6;letter-spacing:0px;">render1</div>
<div style="left:1311px;top:1009.5px;width:23.799999999999955px;height:22.0px;background:#262729;border:1.6px solid #6e6e6e;box-sizing:border-box"></div>
<div style="left:1316.9px;top:1014.5px;width:12px;height:12px;border-radius:50%;background:#2a3a5c"></div>
<div style="left:1334.8px;top:1009.5px;width:22.200000000000045px;height:22.0px;background:#262729;border:1.6px solid #6e6e6e;box-sizing:border-box"></div>
<svg style="position:absolute;left:1337.9px;top:1012.5px" width="16.0" height="16.0" viewBox="0 0 16 16"><path d="M8 1.5 Q9 7 14.5 8 Q9 9 8 14.5 Q7 9 1.5 8 Q7 7 8 1.5 Z" fill="#5e5e5e"/></svg>
<div style="left:1386px;top:963px;width:90px;height:45px;background-color:#3a3a3a;background-image:linear-gradient(45deg,#2c2c2c 25%,transparent 25%,transparent 75%,#2c2c2c 75%),linear-gradient(45deg,#2c2c2c 25%,transparent 25%,transparent 75%,#2c2c2c 75%);background-size:8px 8px;background-position:0 0,4px 4px"></div>
<svg style="position:absolute;left:1418px;top:920px" width="80" height="80"><defs><radialGradient id="sp5" cx="0.45" cy="0.35" r="0.65"><stop offset="0" stop-color="#dcdcdc"/><stop offset="0.7" stop-color="#b8b8b8"/><stop offset="1" stop-color="#7a7a7a"/></radialGradient></defs><circle cx="40" cy="40" r="40" fill="url(#sp5)"/></svg>
<div style="left:1383px;top:1009.5px;width:97px;height:22.0px;background:#262729;border:1.6px solid #767676;box-sizing:border-box"></div>
<div class="t" style="left:1388px;top:1013.9px;font-family:'Liberation Mono',monospace;font-size:16.6px;font-weight:normal;color:#d6d6d6;letter-spacing:0px;">null2</div>
<div style="left:868px;top:1206px;width:168px;height:91px;background:#6e6e6e"></div>
<div style="left:909px;top:1206px;width:113px;height:2px;background:#9a9a9a"></div>
<div style="left:916px;top:1214px;width:100px;height:76px;background:#19191a"></div>
<div style="left:868px;top:1206px;width:41px;height:91px;background:#a59a3c"></div>
<div style="left:868px;top:1206px;width:1.2999999999999545px;height:91px;background:#f2e286"></div>
<div style="left:868px;top:1206px;width:41px;height:1.2999999999999545px;background:#f2e286"></div>
<div style="left:868px;top:1295.7px;width:41px;height:1.2999999999999545px;background:#f2e286"></div>
<div style="left:880.7px;top:1206px;width:1.2999999999999545px;height:91px;background:#f2e286"></div>
<div style="left:907px;top:1206px;width:2px;height:91px;background:#f2e286"></div>
<div style="left:881px;top:1234.3px;width:28px;height:1.400000000000091px;background:#f2e286"></div>
<div style="left:881px;top:1261.8px;width:28px;height:1.400000000000091px;background:#f2e286"></div>
<div style="left:881px;top:1290.3px;width:28px;height:1.400000000000091px;background:#f2e286"></div>
<svg style="position:absolute;left:883.9000000000001px;top:1210.7px" width="21.6" height="21.6" viewBox="0 0 16 16"><circle cx="8" cy="8" r="4.7" fill="none" stroke="#e0d698" stroke-width="2.1"/><circle cx="8" cy="8" r="1.7" fill="#e0d698"/></svg>
<svg style="position:absolute;left:883.9000000000001px;top:1238.95px" width="21.6" height="21.6" viewBox="0 0 16 16"><path d="M2 14.6 L6.2 6.4 L8.4 8.4 L14.2 1.6 L10 10.4 L7.8 8.6 Z" fill="#e0d698" stroke="#e0d698" stroke-width="1.1" stroke-linejoin="round"/></svg>
<svg style="position:absolute;left:883.9000000000001px;top:1266.95px" width="21.6" height="21.6" viewBox="0 0 16 16"><circle cx="6.8" cy="10.3" r="4.2" fill="#e0d698"/><path d="M8.6 6.8 V4.6 A2.5 2.5 0 0 1 13.6 4.6 V7" fill="none" stroke="#e0d698" stroke-width="1.8"/></svg>
<div style="left:1022px;top:1206px;width:14px;height:91px;background:#a9a9a9"></div>
<div style="left:1023.5px;top:1236px;width:11.0px;height:12.5px;background:#a59a3c"></div>
<div style="left:1023.5px;top:1253.5px;width:11.0px;height:13.5px;background:#a59a3c"></div>
<div style="left:1022px;top:1249px;width:15px;height:4px;background:#141416"></div>
<svg style="position:absolute;left:928px;top:1228px" width="80" height="58"><defs><radialGradient id="tor" cx="0.5" cy="0.45" r="0.6"><stop offset="0" stop-color="#d2d2d2"/><stop offset="0.7" stop-color="#c2c2c2"/><stop offset="0.92" stop-color="#a4a4a4"/><stop offset="1" stop-color="#8a8a8a"/></radialGradient><linearGradient id="torin" x1="0" y1="0" x2="0" y2="1"><stop offset="0" stop-color="#c6c6c6"/><stop offset="0.55" stop-color="#b4b4b4"/><stop offset="0.9" stop-color="#7c7c7c"/><stop offset="1" stop-color="#6a6a6a"/></linearGradient><radialGradient id="torh"><stop offset="0" stop-color="#fff"/><stop offset="0.6" stop-color="#fff" stop-opacity="0.6"/><stop offset="1" stop-color="#fff" stop-opacity="0"/></radialGradient></defs><ellipse cx="39.4" cy="29.3" rx="36.5" ry="24.4" fill="url(#tor)"/><ellipse cx="38.5" cy="17.3" rx="17.5" ry="7.6" fill="url(#torin)"/><ellipse cx="38" cy="24.2" rx="6" ry="1.3" fill="#3a3a3a"/><ellipse cx="37" cy="13" rx="3" ry="1.8" fill="url(#torh)"/><ellipse cx="45" cy="37.6" rx="5" ry="1.8" fill="url(#torh)"/><ellipse cx="14" cy="36" rx="2.5" ry="2" fill="url(#torh)" opacity="0.6"/></svg>
<div style="left:868px;top:1299px;width:143px;height:23px;background:#262729;border:1.6px solid #767676;box-sizing:border-box"></div>
<div class="t" style="left:873px;top:1304.4px;font-family:'Liberation Mono',monospace;font-size:16.6px;font-weight:normal;color:#d6d6d6;letter-spacing:0px;">phong1</div>
<div style="left:1012px;top:1299px;width:24px;height:23px;background:#262729;border:1.6px solid #6e6e6e;box-sizing:border-box"></div>
<svg style="position:absolute;left:1016.0px;top:1302.5px" width="16.0" height="16.0" viewBox="0 0 16 16"><path d="M8 1.5 Q9 7 14.5 8 Q9 9 8 14.5 Q7 9 1.5 8 Q7 7 8 1.5 Z" fill="#5e5e5e"/></svg>
<svg style="position:absolute;left:0;top:0" width="1472" height="1472"><line x1="38" y1="834" x2="192" y2="862" stroke="#8a96a8" stroke-width="1.0" stroke-dasharray="2.2 2.8"/></svg>
<svg style="position:absolute;left:0;top:0" width="1472" height="1472"><polygon points="101,840 117,847 101,853" fill="#5b6a7e"/></svg>
<svg style="position:absolute;left:0;top:0" width="1472" height="1472"><line x1="649" y1="1059" x2="707" y2="1047" stroke="#5a9ad8" stroke-width="1.3"/></svg>
<svg style="position:absolute;left:0;top:0" width="1472" height="1472"><line x1="874" y1="1059" x2="933" y2="1066" stroke="#5a9ad8" stroke-width="1.3"/></svg>
<svg style="position:absolute;left:0;top:0" width="1472" height="1472"><line x1="1139" y1="1036" x2="1190" y2="1010" stroke="#8a96a8" stroke-width="1.0" stroke-dasharray="2.2 2.8"/></svg>
<svg style="position:absolute;left:0;top:0" width="1472" height="1472"><polygon points="1141,1024 1157,1025 1145.5,1038" fill="#5b6a7e"/></svg>
<svg style="position:absolute;left:0;top:0" width="1472" height="1472"><line x1="977" y1="1206" x2="1015" y2="1124" stroke="#8a96a8" stroke-width="1.0" stroke-dasharray="2.2 2.8"/></svg>
<svg style="position:absolute;left:0;top:0" width="1472" height="1472"><polygon points="982,1177 995.5,1168 995,1184" fill="#5b6a7e"/></svg>
<div style="left:853px;top:108px;width:619px;height:855.5px;background:#414141"></div>
<div style="left:853px;top:108px;width:619px;height:73px;background:#5b8a3e"></div>
<div style="left:853px;top:108px;width:619px;height:7px;background:#668f4b"></div>
<div style="left:929px;top:115px;width:543px;height:30px;background:#74a05c"></div>
<div class="t" style="left:859px;top:121.1px;font-family:'Liberation Sans',sans-serif;font-size:17.5px;font-weight:bold;color:#e4ecdc;letter-spacing:0.8px;">DAT to</div>
<div class="t" style="left:934px;top:122.6px;font-family:'Liberation Mono',monospace;font-size:19px;font-weight:normal;color:#e8efe0;letter-spacing:0px;">datto1</div>
<svg style="position:absolute;left:850px;top:146px" width="100" height="32"><path transform="translate(11.7,7.6)" d="M0.8 6.2 Q0.8 0.5 6.8 0.5 Q12.6 0.5 12.6 5.6 Q12.6 8.4 9.6 10 Q8.4 10.7 8.4 12.8 H5 Q5 9.4 7.6 8 Q9 7.2 9 5.8 Q9 3.8 6.8 3.8 Q4.4 3.8 4.4 6.2 Z M5 14.8 H8.4 V18.6 H5 Z" fill="#d8eacc" stroke="#d8eacc" stroke-width="1.3" stroke-linejoin="round"/><rect x="37.4" y="2.7" width="27.8" height="14" fill="#2f6d98"/><rect x="37.4" y="16" width="27" height="14" fill="#efc346"/><path transform="translate(44.7,7.3)" d="M0.8 6.2 Q0.8 0.5 6.8 0.5 Q12.6 0.5 12.6 5.6 Q12.6 8.4 9.6 10 Q8.4 10.7 8.4 12.8 H5 Q5 9.4 7.6 8 Q9 7.2 9 5.8 Q9 3.8 6.8 3.8 Q4.4 3.8 4.4 6.2 Z M5 14.8 H8.4 V18.6 H5 Z" fill="#f4f6ea" stroke="#2e3a20" stroke-width="2.2" stroke-linejoin="round"/><path transform="translate(44.7,7.3)" d="M0.8 6.2 Q0.8 0.5 6.8 0.5 Q12.6 0.5 12.6 5.6 Q12.6 8.4 9.6 10 Q8.4 10.7 8.4 12.8 H5 Q5 9.4 7.6 8 Q9 7.2 9 5.8 Q9 3.8 6.8 3.8 Q4.4 3.8 4.4 6.2 Z M5 14.8 H8.4 V18.6 H5 Z" fill="#f4f6ea" stroke="#f4f6ea" stroke-width="0.8"/><rect x="80.3" y="15" width="7" height="12" fill="#e6f2dc"/><rect x="80.3" y="6" width="7" height="6" fill="#e6f2dc"/></svg>
<svg style="position:absolute;left:1300px;top:148px" width="172" height="30"><path d="M2 22 L4 16 L16 4 L21 8 L9 20 Z" fill="#a6c496"/><ellipse cx="44" cy="13" rx="12.5" ry="7.5" fill="#a6c496"/><path d="M35 17 L33 23 L41 19 Z" fill="#a6c496"/><path d="M65 21.2 L80.9 26 L89.6 12.8 L73.9 8 Z" fill="none" stroke="#e2eed6" stroke-width="2.2" stroke-linejoin="round"/><path d="M75.5 9 L81.5 2 L86 9.5 Z" fill="#e2eed6"/><circle cx="88" cy="8.5" r="1.2" fill="#e2eed6"/><circle cx="111" cy="14.5" r="12.3" fill="#f2f4ea"/><g transform="translate(100,3.5)"><path d="M10.5 0.8 H8 Q4.8 0.8 4.8 3.8 V6 H10.8 V7 H4.2 Q1.2 7 1.2 11 Q1.2 15.2 4.2 15.2 H6 V12.5 Q6 9.8 8.8 9.8 H13 Q15.4 9.8 15.4 7.4 V3.8 Q15.4 0.8 12.4 0.8 Z" fill="#386c9c"/><path transform="rotate(180 11 11)" d="M10.5 0.8 H8 Q4.8 0.8 4.8 3.8 V6 H10.8 V7 H4.2 Q1.2 7 1.2 11 Q1.2 15.2 4.2 15.2 H6 V12.5 Q6 9.8 8.8 9.8 H13 Q15.4 9.8 15.4 7.4 V3.8 Q15.4 0.8 12.4 0.8 Z" fill="#f0c448"/><circle cx="7.6" cy="3.2" r="1" fill="#f2f4ea"/><circle cx="14.4" cy="18.8" r="1" fill="#f2f4ea"/></g><rect x="141" y="5" width="5" height="20" fill="#e6f0dc"/><rect x="133" y="13" width="21" height="5" fill="#e6f0dc"/><circle cx="177" cy="15" r="11.5" fill="none" stroke="#e6f0dc" stroke-width="2.6"/><circle cx="177" cy="15" r="6" fill="none" stroke="#e6f0dc" stroke-width="2.4"/></svg>
<div class="t" style="left:869px;top:198.7px;font-family:'Liberation Sans',sans-serif;font-size:19.2px;font-weight:normal;color:#d4d4d4;letter-spacing:0px;">DAT to</div>
<div class="t" style="left:946px;top:198.7px;font-family:'Liberation Sans',sans-serif;font-size:19.2px;font-weight:normal;color:#d4d4d4;letter-spacing:0px;">Common</div>
<div style="left:859px;top:223px;width:78px;height:4px;background:#e2e2e2"></div>
<div style="left:937px;top:225.5px;width:535px;height:1.5px;background:#9a9a9a"></div>
<div class="t" style="right:395.54999999999995px;top:241.9px;font-family:'Liberation Sans',sans-serif;font-size:18.9px;font-weight:normal;color:#d6d6d6;letter-spacing:-1.0px;">DAT</div>
<div class="t" style="right:394.3800000000001px;top:274.9px;font-family:'Liberation Sans',sans-serif;font-size:18.9px;font-weight:normal;color:#d6d6d6;letter-spacing:0.17px;">Select Rows</div>
<div class="t" style="right:393.93000000000006px;top:307.9px;font-family:'Liberation Sans',sans-serif;font-size:18.9px;font-weight:normal;color:#6b6b6b;letter-spacing:0.62px;">Start Row Name</div>
<div class="t" style="right:393.73px;top:340.9px;font-family:'Liberation Sans',sans-serif;font-size:18.9px;font-weight:normal;color:#6b6b6b;letter-spacing:0.82px;">Start Row Index</div>
<div class="t" style="right:394.1500000000001px;top:373.9px;font-family:'Liberation Sans',sans-serif;font-size:18.9px;font-weight:normal;color:#6b6b6b;letter-spacing:0.4px;">End Row&nbsp; Name</div>
<div class="t" style="right:393.95000000000005px;top:406.9px;font-family:'Liberation Sans',sans-serif;font-size:18.9px;font-weight:normal;color:#6b6b6b;letter-spacing:0.6px;">End Row Index</div>
<div class="t" style="right:394.18000000000006px;top:439.9px;font-family:'Liberation Sans',sans-serif;font-size:18.9px;font-weight:normal;color:#6b6b6b;letter-spacing:0.37px;">Row Select Values</div>
<div class="t" style="right:394.02px;top:472.9px;font-family:'Liberation Sans',sans-serif;font-size:18.9px;font-weight:normal;color:#6b6b6b;letter-spacing:0.53px;">Row Select Condition</div>
<div class="t" style="right:393.80999999999995px;top:505.9px;font-family:'Liberation Sans',sans-serif;font-size:18.9px;font-weight:normal;color:#6b6b6b;letter-spacing:0.74px;">From Column</div>
<div class="t" style="right:394.31999999999994px;top:538.9px;font-family:'Liberation Sans',sans-serif;font-size:18.9px;font-weight:normal;color:#d6d6d6;letter-spacing:0.23px;">Select Cols</div>
<div class="t" style="right:393.93000000000006px;top:571.9px;font-family:'Liberation Sans',sans-serif;font-size:18.9px;font-weight:normal;color:#6b6b6b;letter-spacing:0.62px;">Start Col Name</div>
<div class="t" style="right:393.76px;top:604.9px;font-family:'Liberation Sans',sans-serif;font-size:18.9px;font-weight:normal;color:#6b6b6b;letter-spacing:0.79px;">Start Col Index</div>
<div class="t" style="right:394.19000000000005px;top:637.9px;font-family:'Liberation Sans',sans-serif;font-size:18.9px;font-weight:normal;color:#6b6b6b;letter-spacing:0.36px;">End Col Name</div>
<div class="t" style="right:393.97px;top:670.9px;font-family:'Liberation Sans',sans-serif;font-size:18.9px;font-weight:normal;color:#6b6b6b;letter-spacing:0.58px;">End Col Index</div>
<div class="t" style="right:394.19000000000005px;top:703.9px;font-family:'Liberation Sans',sans-serif;font-size:18.9px;font-weight:normal;color:#6b6b6b;letter-spacing:0.36px;">Col Select Values</div>
<div class="t" style="right:394.01px;top:736.9px;font-family:'Liberation Sans',sans-serif;font-size:18.9px;font-weight:normal;color:#6b6b6b;letter-spacing:0.54px;">Col Select Condition</div>
<div class="t" style="right:394.1300000000001px;top:769.9px;font-family:'Liberation Sans',sans-serif;font-size:18.9px;font-weight:normal;color:#6b6b6b;letter-spacing:0.42px;">From Row</div>
<div class="t" style="right:393.8800000000001px;top:802.9px;font-family:'Liberation Sans',sans-serif;font-size:18.9px;font-weight:normal;color:#d6d6d6;letter-spacing:0.67px;">Output</div>
<div class="t" style="right:394.1300000000001px;top:835.9px;font-family:'Liberation Sans',sans-serif;font-size:18.9px;font-weight:normal;color:#d6d6d6;letter-spacing:0.42px;">First Row is</div>
<div class="t" style="right:394.01px;top:868.9px;font-family:'Liberation Sans',sans-serif;font-size:18.9px;font-weight:normal;color:#d6d6d6;letter-spacing:0.54px;">First Column is</div>
<div class="t" style="right:394.04999999999995px;top:901.9px;font-family:'Liberation Sans',sans-serif;font-size:18.9px;font-weight:normal;color:#d6d6d6;letter-spacing:0.5px;">Default Value</div>
<div class="t" style="right:394.01px;top:934.9px;font-family:'Liberation Sans',sans-serif;font-size:18.9px;font-weight:normal;color:#6b6b6b;letter-spacing:0.54px;">Duplicate Names</div>
<div style="left:1084px;top:235px;width:378px;height:30px;background:#b5b5b5"></div>
<svg style="position:absolute;left:1462px;top:234px" width="10" height="12"><path d="M0.8 0.8 V4.5 H6.5 L10 8" fill="none" stroke="#111" stroke-width="1.6"/></svg>
<div class="t" style="left:1089px;top:242.1px;font-family:'Liberation Mono',monospace;font-size:19px;font-weight:normal;color:#111111;letter-spacing:0px;">select1</div>
<div style="left:1084.5px;top:268.5px;width:387.5px;height:28.0px;background:#5d5d5d;border-left:1.5px solid #353535;border-top:1.5px solid #4a4a4a;box-sizing:border-box"></div>
<div class="t" style="left:1092px;top:274.9px;font-family:'Liberation Sans',sans-serif;font-size:18.9px;font-weight:normal;color:#dadada;letter-spacing:0.45px;">All</div>
<div style="left:1084.5px;top:532.5px;width:387.5px;height:28.0px;background:#5d5d5d;border-left:1.5px solid #353535;border-top:1.5px solid #4a4a4a;box-sizing:border-box"></div>
<div class="t" style="left:1092px;top:538.9px;font-family:'Liberation Sans',sans-serif;font-size:18.9px;font-weight:normal;color:#dadada;letter-spacing:0.45px;">All</div>
<div style="left:1084.5px;top:796.5px;width:387.5px;height:28.0px;background:#5d5d5d;border-left:1.5px solid #353535;border-top:1.5px solid #4a4a4a;box-sizing:border-box"></div>
<div class="t" style="left:1092px;top:802.9px;font-family:'Liberation Sans',sans-serif;font-size:18.9px;font-weight:normal;color:#dadada;letter-spacing:0.45px;">Channel per Value</div>
<div style="left:1084.5px;top:829.5px;width:387.5px;height:28.0px;background:#5d5d5d;border-left:1.5px solid #353535;border-top:1.5px solid #4a4a4a;box-sizing:border-box"></div>
<div class="t" style="left:1092px;top:835.9px;font-family:'Liberation Sans',sans-serif;font-size:18.9px;font-weight:normal;color:#dadada;letter-spacing:0.45px;">Values</div>
<div style="left:1084.5px;top:862.5px;width:387.5px;height:28.0px;background:#5d5d5d;border-left:1.5px solid #353535;border-top:1.5px solid #4a4a4a;box-sizing:border-box"></div>
<div class="t" style="left:1092px;top:868.9px;font-family:'Liberation Sans',sans-serif;font-size:18.9px;font-weight:normal;color:#dadada;letter-spacing:0.45px;">Values</div>
<div style="left:1084.5px;top:928.5px;width:387.5px;height:28.0px;background:#4a4a4a;border-left:1.5px solid #353535;border-top:1.5px solid #4a4a4a;box-sizing:border-box"></div>
<div class="t" style="left:1092px;top:934.9px;font-family:'Liberation Sans',sans-serif;font-size:18.9px;font-weight:normal;color:#5f5f5f;letter-spacing:0.45px;">Make Unique</div>
<div class="t" style="left:1089px;top:340.9px;font-family:'Liberation Sans',sans-serif;font-size:18.9px;font-weight:normal;color:#6b6b6b;letter-spacing:0px;">0</div>
<div style="left:1162px;top:346.5px;width:310px;height:3.0px;background:#4b4b4b"></div>
<div style="left:1191.5px;top:337.0px;width:14.5px;height:22.5px;background:#525252;border:1px solid #4c4c4c;box-sizing:border-box"></div>
<div class="t" style="left:1089px;top:406.9px;font-family:'Liberation Sans',sans-serif;font-size:18.9px;font-weight:normal;color:#6b6b6b;letter-spacing:0px;">0</div>
<div style="left:1162px;top:412.5px;width:310px;height:3.0px;background:#4b4b4b"></div>
<div style="left:1191.5px;top:403.0px;width:14.5px;height:22.5px;background:#525252;border:1px solid #4c4c4c;box-sizing:border-box"></div>
<div class="t" style="left:1089px;top:505.9px;font-family:'Liberation Sans',sans-serif;font-size:18.9px;font-weight:normal;color:#6b6b6b;letter-spacing:0px;">0</div>
<div style="left:1162px;top:511.5px;width:310px;height:3.0px;background:#4b4b4b"></div>
<div style="left:1162.5px;top:502.0px;width:14.5px;height:22.5px;background:#525252;border:1px solid #4c4c4c;box-sizing:border-box"></div>
<div class="t" style="left:1089px;top:604.9px;font-family:'Liberation Sans',sans-serif;font-size:18.9px;font-weight:normal;color:#6b6b6b;letter-spacing:0px;">0</div>
<div style="left:1162px;top:610.5px;width:310px;height:3.0px;background:#4b4b4b"></div>
<div style="left:1191.5px;top:601.0px;width:14.5px;height:22.5px;background:#525252;border:1px solid #4c4c4c;box-sizing:border-box"></div>
<div class="t" style="left:1089px;top:670.9px;font-family:'Liberation Sans',sans-serif;font-size:18.9px;font-weight:normal;color:#6b6b6b;letter-spacing:0px;">0</div>
<div style="left:1162px;top:676.5px;width:310px;height:3.0px;background:#4b4b4b"></div>
<div style="left:1191.5px;top:667.0px;width:14.5px;height:22.5px;background:#525252;border:1px solid #4c4c4c;box-sizing:border-box"></div>
<div class="t" style="left:1089px;top:769.9px;font-family:'Liberation Sans',sans-serif;font-size:18.9px;font-weight:normal;color:#6b6b6b;letter-spacing:0px;">0</div>
<div style="left:1162px;top:775.5px;width:310px;height:3.0px;background:#4b4b4b"></div>
<div style="left:1162.5px;top:766.0px;width:14.5px;height:22.5px;background:#525252;border:1px solid #4c4c4c;box-sizing:border-box"></div>
<div class="t" style="left:1090px;top:440.9px;font-family:'Liberation Sans',sans-serif;font-size:18.9px;font-weight:normal;color:#6b6b6b;letter-spacing:0px;">*</div>
<div class="t" style="left:1090px;top:704.9px;font-family:'Liberation Sans',sans-serif;font-size:18.9px;font-weight:normal;color:#6b6b6b;letter-spacing:0px;">*</div>
<div style="left:1084.5px;top:895px;width:74.0px;height:31px;background:#4f4f4f"></div>
<div class="t" style="left:1089px;top:901.9px;font-family:'Liberation Sans',sans-serif;font-size:18.9px;font-weight:normal;color:#dadada;letter-spacing:0px;">0</div>
<div style="left:1159px;top:893px;width:313px;height:34px;background:#3a3a3a"></div>
<div style="left:1162px;top:907.5px;width:310px;height:3.0px;background:#2b2b2b"></div>
<div style="left:1322px;top:899px;width:12px;height:21px;background:#6a6a6a"></div>
<div style="left:935.6px;top:786.3px;width:480.4px;height:132.70000000000005px;border:3.5px solid #e03c4f;border-radius:3px;box-sizing:border-box"></div>
<div style="left:0px;top:1366px;width:1472px;height:1.5px;background:#6a6b6e"></div>
<div style="left:0px;top:1367.5px;width:1472px;height:20.0px;background:#141417"></div>
<div style="left:0px;top:1387px;width:1472px;height:1.5px;background:#6a6b6e"></div>
<div style="left:0px;top:1388.5px;width:1472px;height:1.5px;background:#0e0f12"></div>
<div style="left:0px;top:1390px;width:1457px;height:12.5px;background:#3d4c70"></div>
<div style="left:1457px;top:1390px;width:2px;height:12.5px;background:#1a1b1e"></div>
<div style="left:1459px;top:1390.5px;width:13px;height:11.5px;background:#4e4f52;border:1px solid #6a6a6a;box-sizing:border-box"></div>
<div style="left:0px;top:1402.5px;width:1472px;height:1.5px;background:#16171a"></div>
<div style="left:0px;top:1404px;width:1472px;height:1.5px;background:#58595c"></div>
<div style="left:0px;top:1405.5px;width:1472px;height:64.5px;background:#2e2f33"></div>
<div style="left:0px;top:1469.5px;width:1472px;height:2.5px;background:#dcdcdc"></div>
<div style="left:107px;top:1367.5px;width:1.2000000000000028px;height:20.0px;background:#77787c"></div>
<div class="t" style="left:109px;top:1367.0px;font-family:'Liberation Sans',sans-serif;font-size:17px;font-weight:normal;color:#a5a6aa;letter-spacing:-0.25px;">101</div>
<div style="left:247px;top:1367.5px;width:1.1999999999999886px;height:20.0px;background:#77787c"></div>
<div class="t" style="left:249px;top:1367.0px;font-family:'Liberation Sans',sans-serif;font-size:17px;font-weight:normal;color:#a5a6aa;letter-spacing:-0.25px;">151</div>
<div style="left:386px;top:1367.5px;width:1.1999999999999886px;height:20.0px;background:#77787c"></div>
<div class="t" style="left:388px;top:1367.0px;font-family:'Liberation Sans',sans-serif;font-size:17px;font-weight:normal;color:#a5a6aa;letter-spacing:-0.25px;">201</div>
<div style="left:525px;top:1367.5px;width:1.2000000000000455px;height:20.0px;background:#77787c"></div>
<div class="t" style="left:527px;top:1367.0px;font-family:'Liberation Sans',sans-serif;font-size:17px;font-weight:normal;color:#a5a6aa;letter-spacing:-0.25px;">251</div>
<div style="left:665px;top:1367.5px;width:1.2000000000000455px;height:20.0px;background:#77787c"></div>
<div class="t" style="left:667px;top:1367.0px;font-family:'Liberation Sans',sans-serif;font-size:17px;font-weight:normal;color:#a5a6aa;letter-spacing:-0.25px;">301</div>
<div style="left:804px;top:1367.5px;width:1.2000000000000455px;height:20.0px;background:#77787c"></div>
<div class="t" style="left:806px;top:1367.0px;font-family:'Liberation Sans',sans-serif;font-size:17px;font-weight:normal;color:#a5a6aa;letter-spacing:-0.25px;">351</div>
<div style="left:943px;top:1367.5px;width:1.2000000000000455px;height:20.0px;background:#77787c"></div>
<div class="t" style="left:945px;top:1367.0px;font-family:'Liberation Sans',sans-serif;font-size:17px;font-weight:normal;color:#a5a6aa;letter-spacing:-0.25px;">401</div>
<div style="left:1083px;top:1367.5px;width:1.2000000000000455px;height:20.0px;background:#77787c"></div>
<div class="t" style="left:1085px;top:1367.0px;font-family:'Liberation Sans',sans-serif;font-size:17px;font-weight:normal;color:#a5a6aa;letter-spacing:-0.25px;">451</div>
<div style="left:1222px;top:1367.5px;width:1.2000000000000455px;height:20.0px;background:#77787c"></div>
<div class="t" style="left:1224px;top:1367.0px;font-family:'Liberation Sans',sans-serif;font-size:17px;font-weight:normal;color:#a5a6aa;letter-spacing:-0.25px;">501</div>
<div style="left:1362px;top:1367.5px;width:1.2000000000000455px;height:20.0px;background:#77787c"></div>
<div class="t" style="left:1364px;top:1367.0px;font-family:'Liberation Sans',sans-serif;font-size:17px;font-weight:normal;color:#a5a6aa;letter-spacing:-0.25px;">551</div>
<div style="left:1501px;top:1367.5px;width:1.2000000000000455px;height:20.0px;background:#77787c"></div>
<div class="t" style="left:1503px;top:1367.0px;font-family:'Liberation Sans',sans-serif;font-size:17px;font-weight:normal;color:#a5a6aa;letter-spacing:-0.25px;">601</div>
<div class="t" style="left:1462px;top:1367.0px;font-family:'Liberation Sans',sans-serif;font-size:17px;font-weight:normal;color:#a5a6aa;letter-spacing:0px;">6</div>
<div style="left:765px;top:1369px;width:2.5px;height:17px;background:#7f8fb8"></div>
<div style="left:-2px;top:1408px;width:278px;height:57.5px;background:#000;border:1.5px solid #636468;box-sizing:border-box"></div>
<div class="t" style="left:7px;top:1419.6px;font-family:'Liberation Sans',sans-serif;font-size:40.5px;font-weight:normal;color:#8ea6de;letter-spacing:2.3px;">00:00:05:36</div>
<div style="left:278.5px;top:1408px;width:202.5px;height:57.5px;background:#000;border:1.5px solid #636468;box-sizing:border-box"></div>
<div class="t" style="left:380px;transform:translateX(-50%);top:1419.6px;font-family:'Liberation Sans',sans-serif;font-size:40.5px;font-weight:normal;color:#8ea6de;letter-spacing:0px;">337</div>
<div style="left:484px;top:1408px;width:59px;height:57.5px;background:#393b41;border:1.5px solid #5e6064;box-sizing:border-box"></div>
<div style="left:545px;top:1408px;width:59px;height:57.5px;background:#393b41;border:1.5px solid #5e6064;box-sizing:border-box"></div>
<div style="left:606.5px;top:1408px;width:59.5px;height:57.5px;background:#393b41;border:1.5px solid #5e6064;box-sizing:border-box"></div>
<div style="left:668.5px;top:1408px;width:58.5px;height:57.5px;background:#c8894f;border:1.5px solid #5e6064;box-sizing:border-box"></div>
<div style="left:730px;top:1408px;width:59px;height:57.5px;background:#393b41;border:1.5px solid #5e6064;box-sizing:border-box"></div>
<div style="left:791px;top:1408px;width:58.5px;height:57.5px;background:#393b41;border:1.5px solid #5e6064;box-sizing:border-box"></div>
<svg style="position:absolute;left:0;top:0" width="1472" height="1472"><rect x="504" y="1430" width="2.6" height="15" fill="#b8bcc8"/><polygon points="514,1430 506.5,1437.5 514,1445" fill="#b8bcc8"/><polygon points="522,1430 514.5,1437.5 522,1445" fill="#b8bcc8"/><rect x="569.5" y="1430" width="3.5" height="15" fill="#b8bcc8"/><rect x="576" y="1430" width="3.5" height="15" fill="#b8bcc8"/><polygon points="638.5,1430 630,1437.5 638.5,1445" fill="#b8bcc8"/><polygon points="694.5,1430 702.5,1437.5 694.5,1445" fill="#5c0d0b"/><rect x="754" y="1436.5" width="9" height="2" fill="#b8bcc8"/><rect x="813" y="1436.3" width="16" height="2.2" fill="#c8ccd4"/><rect x="819.9" y="1429.5" width="2.2" height="16" fill="#c8ccd4"/></svg>
<div class="t" style="left:858px;top:1411.5px;font-family:'Liberation Sans',sans-serif;font-size:19.4px;font-weight:normal;color:#c8ccd4;letter-spacing:0.3px;">Range Limit</div>
<div style="left:855px;top:1439px;width:77.5px;height:26px;background:#c8894f;border:1.5px solid #8a8a8a;box-sizing:border-box"></div>
<div class="t" style="left:871px;top:1443.0px;font-family:'Liberation Sans',sans-serif;font-size:19.4px;font-weight:normal;color:#5a120c;letter-spacing:0.3px;">Loop</div>
<div style="left:934.5px;top:1439px;width:67.5px;height:26px;background:#33363c;border:1.5px solid #707276;box-sizing:border-box"></div>
<div class="t" style="left:946px;top:1443.0px;font-family:'Liberation Sans',sans-serif;font-size:19.4px;font-weight:normal;color:#c8ccd4;letter-spacing:-0.2px;">Once</div>
</body></html>
